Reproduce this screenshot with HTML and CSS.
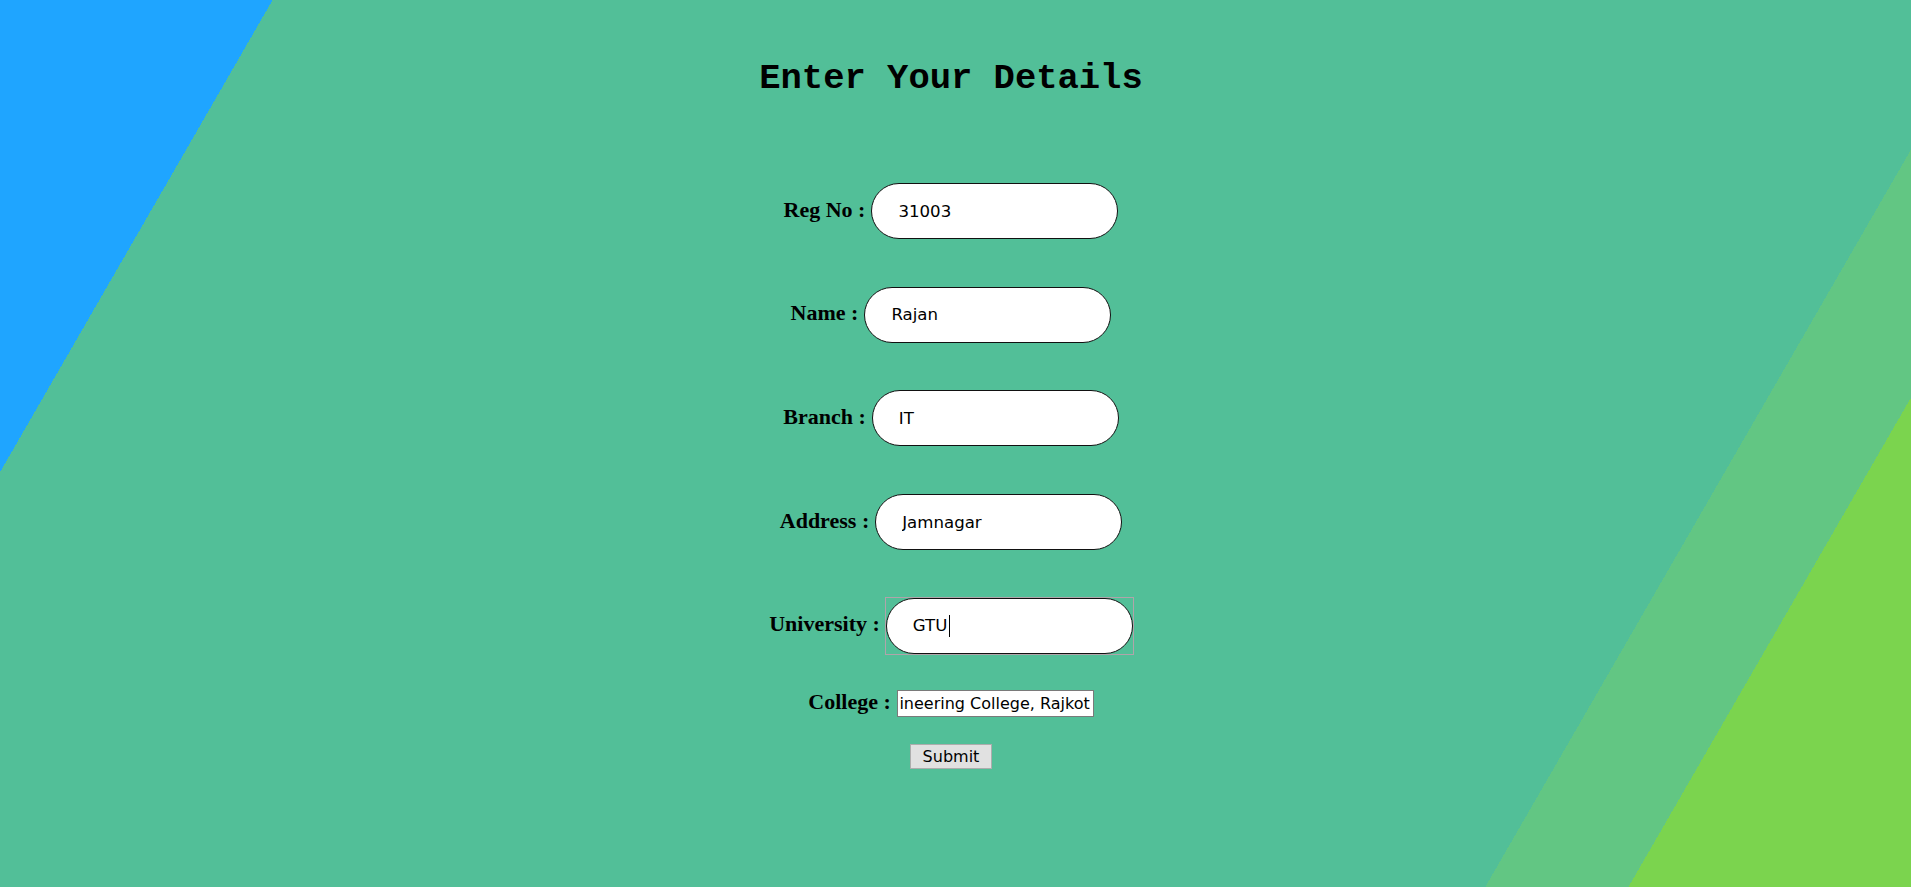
FILE: index.html
```html
<!DOCTYPE html>
<html lang="en">
<head>
<meta charset="utf-8">
<title>Enter Your Details</title>
<link rel="stylesheet" href="styles.css">
</head>
<body>
<main class="page">
  <h1 class="title">Enter Your Details</h1>
  <form class="form">
    <div class="field">
      <label class="label" for="reg">Reg No :</label>
      <input class="pill" id="reg" type="text" value="31003">
    </div>
    <div class="field">
      <label class="label" for="name">Name :</label>
      <input class="pill" id="name" type="text" value="Rajan">
    </div>
    <div class="field">
      <label class="label" for="branch">Branch :</label>
      <input class="pill" id="branch" type="text" value="IT">
    </div>
    <div class="field">
      <label class="label" for="address">Address :</label>
      <input class="pill" id="address" type="text" value="Jamnagar">
    </div>
    <div class="field">
      <label class="label" for="university">University :</label>
      <span class="focus-wrap">
        <input class="pill" id="university" type="text" value="GTU">
        <span class="caret"></span>
      </span>
    </div>
    <div class="field field--plain">
      <label class="label" for="college">College :</label>
      <input class="plain" id="college" type="text" value="Government Engineering College, Rajkot">
    </div>
    <div class="actions">
      <button class="submit" type="button">Submit</button>
    </div>
  </form>
</main>
</body>
</html>
```
FILE: styles.css
```css
html, body {
  margin: 0;
  padding: 0;
  overflow: hidden;
}

body {
  min-height: 100vh;
  background: linear-gradient(120deg,
    #1fa5ff 0 11.25%,
    #52bf98 11.25% 82.43%,
    #62c683 82.43% 88.34%,
    #7bd44e 88.34% 100%);
}

.page {
  box-sizing: border-box;
  padding: 58.5px 9px 0 0;
  text-align: center;
}

.title {
  margin: 0;
  font-family: "Liberation Mono", "Courier New", monospace;
  font-weight: bold;
  font-size: 35.5px;
  line-height: 40px;
  color: #000;
}

.form {
  margin: 84.5px 0 0 0;
  display: flex;
  flex-direction: column;
  align-items: center;
}

.field {
  display: flex;
  align-items: baseline;
  justify-content: center;
  gap: 6px;
}

.field + .field {
  margin-top: 47.7px;
}

.field.field--plain {
  margin-top: 35px;
}

.label {
  font-family: "Liberation Serif", "Times New Roman", serif;
  font-weight: bold;
  font-size: 22px;
  color: #000;
}

.pill {
  box-sizing: border-box;
  width: 247px;
  height: 56px;
  margin: 0;
  padding: 0 24px 0 26px;
  border: 1px solid #111;
  border-radius: 28px;
  background: #fff;
  color: #000;
  font-family: "DejaVu Sans", Verdana, sans-serif;
  font-size: 16.6px;
  outline: none;
}

.focus-wrap {
  position: relative;
  display: inline-flex;
  outline: 1px solid #b0a4aa;
}

.caret {
  position: absolute;
  left: 63px;
  top: 17px;
  width: 1px;
  height: 22px;
  background: #000;
}

.plain {
  box-sizing: border-box;
  width: 197px;
  height: 27px;
  margin: 0;
  padding: 1px 3px 1px 2px;
  border: 1px solid #7a7a7a;
  border-radius: 0;
  background: #fff;
  color: #000;
  font-family: "DejaVu Sans", Verdana, sans-serif;
  font-size: 16px;
  direction: rtl;
  outline: none;
}

.actions {
  margin-top: 26.8px;
}

.submit {
  box-sizing: border-box;
  width: 82px;
  height: 25px;
  margin: 0;
  padding: 0;
  border: 1px solid #adadad;
  border-radius: 0;
  background: #e1e1e1;
  color: #000;
  font-family: "DejaVu Sans", Verdana, sans-serif;
  font-size: 16px;
  line-height: 23px;
}
```
